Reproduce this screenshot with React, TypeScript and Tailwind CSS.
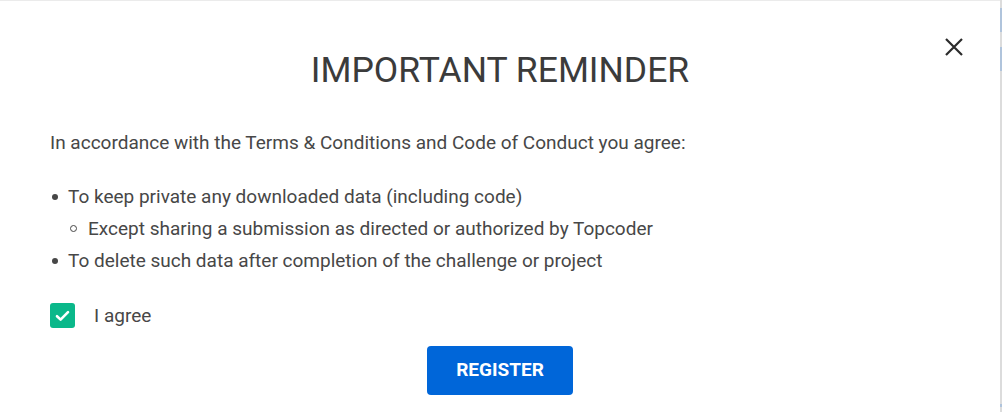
import React from "react";

export default function App() {
  return (
    <div className="w-[1002px] h-[412px] bg-white flex overflow-hidden" style={{ fontFamily: "Roboto, 'Liberation Sans', sans-serif" }}>
      <div className="relative w-[1000px] h-full border-t border-[#ebebeb] flex flex-col">
        <button className="absolute left-[945px] top-[37px] w-[18px] h-[18px] flex items-center justify-center" aria-label="close">
          <svg width="18" height="18" viewBox="0 0 18 18" fill="none">
            <path d="M1 1L17 17M17 1L1 17" stroke="#2b2b2b" strokeWidth="2.2" strokeLinecap="butt" />
          </svg>
        </button>
        <h1 className="pt-[49px] text-center text-[35.5px] leading-[40px] font-normal text-[#3b3b3b]">IMPORTANT REMINDER</h1>
        <div className="px-[50px] mt-[41px] text-[19px] text-[#474747]">
          <p className="leading-[24px]">In accordance with the Terms &amp; Conditions and Code of Conduct you agree:</p>
          <ul className="mt-[25.5px] leading-[32px]">
            <li className="flex items-center">
              <span className="w-[6px] h-[6px] rounded-full bg-[#474747] ml-[2px] mr-[10px]" />
              <span>To keep private any downloaded data (including code)</span>
            </li>
            <li className="flex items-center pl-[20px]">
              <span className="w-[7px] h-[7px] rounded-full border border-[#474747] ml-[0px] mr-[11px]" />
              <span>Except sharing a submission as directed or authorized by Topcoder</span>
            </li>
            <li className="flex items-center">
              <span className="w-[6px] h-[6px] rounded-full bg-[#474747] ml-[2px] mr-[10px]" />
              <span>To delete such data after completion of the challenge or project</span>
            </li>
          </ul>
          <label className="mt-[26.5px] flex items-center">
            <span className="w-[25px] h-[25px] rounded-[3px] bg-[#0ab88a] flex items-center justify-center">
              <svg width="15" height="12" viewBox="0 0 15 12" fill="none">
                <path d="M2 6.2L5.6 9.6L13 2.2" stroke="white" strokeWidth="2.6" strokeLinecap="round" strokeLinejoin="round" />
              </svg>
            </span>
            <span className="ml-[19px] leading-[24px]">I agree</span>
          </label>
        </div>
        <div className="flex justify-center mt-[18px]">
          <button className="w-[146px] h-[49px] rounded-[4px] bg-[#0066d9] text-white text-[19px] font-bold">REGISTER</button>
        </div>
      </div>
      <div className="relative w-[2px] h-full bg-[#dcdcdc]">
        <div className="absolute top-[8px] h-[24px] w-full bg-[#b0c4dc]" />
        <div className="absolute top-[47px] h-[24px] w-full bg-[#b0c4dc]" />
        <div className="absolute top-[404px] h-[3px] w-full bg-[#b0c4dc]" />
      </div>
    </div>
  );
}
